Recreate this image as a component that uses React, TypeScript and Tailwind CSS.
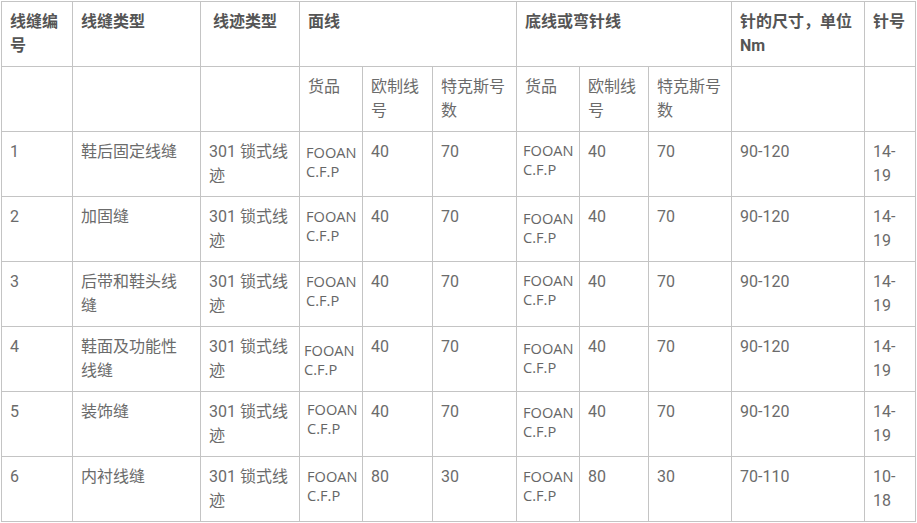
const font = "font-['Roboto','Noto_Sans_CJK_SC',sans-serif]";

type Row = {
  no: string;
  kind: string;
  stitch: string;
  topDy: number;
  topDx: number;
  botDy: number;
  euro: string;
  tex: string;
  size: string;
  needle: [string, string];
};

const rows: Row[] = [
  { no: "1", kind: "鞋后固定线缝", stitch: "301 锁式线迹", topDy: 1, topDx: 0, botDy: -1, euro: "40", tex: "70", size: "90-120", needle: ["14-", "19"] },
  { no: "2", kind: "加固缝", stitch: "301 锁式线迹", topDy: 0, topDx: 0, botDy: 2, euro: "40", tex: "70", size: "90-120", needle: ["14-", "19"] },
  { no: "3", kind: "后带和鞋头线缝", stitch: "301 锁式线迹", topDy: 0, topDx: 0, botDy: -1, euro: "40", tex: "70", size: "90-120", needle: ["14-", "19"] },
  { no: "4", kind: "鞋面及功能性线缝", stitch: "301 锁式线迹", topDy: 4, topDx: -2, botDy: 2, euro: "40", tex: "70", size: "90-120", needle: ["14-", "19"] },
  { no: "5", kind: "装饰缝", stitch: "301 锁式线迹", topDy: -2, topDx: 1, botDy: 1, euro: "40", tex: "70", size: "90-120", needle: ["14-", "19"] },
  { no: "6", kind: "内衬线缝", stitch: "301 锁式线迹", topDy: 0, topDx: 1, botDy: 0, euro: "80", tex: "30", size: "70-110", needle: ["10-", "18"] },
];

const cell = "border border-[#c4c4c4] px-2 py-2 align-top";

function Fooan({ dy, dx }: { dy: number; dx: number }) {
  return (
    <div
      className="whitespace-nowrap font-['Open_Sans','Noto_Sans',sans-serif] text-[14.6px] leading-[19px] text-[#666]"
      style={{ marginTop: 2 + dy, marginLeft: -2 + dx }}
    >
      FOOAN
      <br />
      C.F.P
    </div>
  );
}

export default function App() {
  return (
    <div className="min-h-[523px] bg-white pl-px pt-px">
      <table
        className={`${font} w-[914px] table-fixed border-collapse text-[16px] leading-6 text-[#6b6b6b]`}
      >
        <colgroup>
          <col className="w-[71px]" />
          <col className="w-[128px]" />
          <col className="w-[99px]" />
          <col className="w-[63px]" />
          <col className="w-[70px]" />
          <col className="w-[84px]" />
          <col className="w-[63px]" />
          <col className="w-[69px]" />
          <col className="w-[83px]" />
          <col className="w-[133px]" />
          <col className="w-[51px]" />
        </colgroup>
        <thead>
          <tr className="h-[65px] font-bold text-[#555]">
            <th className={`${cell} text-left`}>线缝编号</th>
            <th className={`${cell} text-left`}>线缝类型</th>
            <th className={`${cell} pl-3 text-left`}>线迹类型</th>
            <th colSpan={3} className={`${cell} text-left`}>面线</th>
            <th colSpan={3} className={`${cell} text-left`}>底线或弯针线</th>
            <th className={`${cell} text-left`}>针的尺寸，单位Nm</th>
            <th className={`${cell} text-left`}>针号</th>
          </tr>
        </thead>
        <tbody>
          <tr className="h-[65px]">
            <td className={cell}></td>
            <td className={cell}></td>
            <td className={cell}></td>
            <td className={cell}>货品</td>
            <td className={cell}>欧制线号</td>
            <td className={cell}>特克斯号数</td>
            <td className={cell}>货品</td>
            <td className={cell}>欧制线号</td>
            <td className={cell}>特克斯号数</td>
            <td className={cell}></td>
            <td className={cell}></td>
          </tr>
          {rows.map((r) => (
            <tr key={r.no} className="h-[65px]">
              <td className={cell}>{r.no}</td>
              <td className={cell}>{r.kind}</td>
              <td className={cell}>{r.stitch}</td>
              <td className={`${cell} py-0`}>
                <Fooan dy={r.topDy} dx={r.topDx} />
              </td>
              <td className={cell}>{r.euro}</td>
              <td className={cell}>{r.tex}</td>
              <td className={`${cell} py-0`}>
                <Fooan dy={r.botDy} dx={0} />
              </td>
              <td className={cell}>{r.euro}</td>
              <td className={cell}>{r.tex}</td>
              <td className={cell}>{r.size}</td>
              <td className={cell}>
                {r.needle[0]}
                <br />
                {r.needle[1]}
              </td>
            </tr>
          ))}
        </tbody>
      </table>
    </div>
  );
}
